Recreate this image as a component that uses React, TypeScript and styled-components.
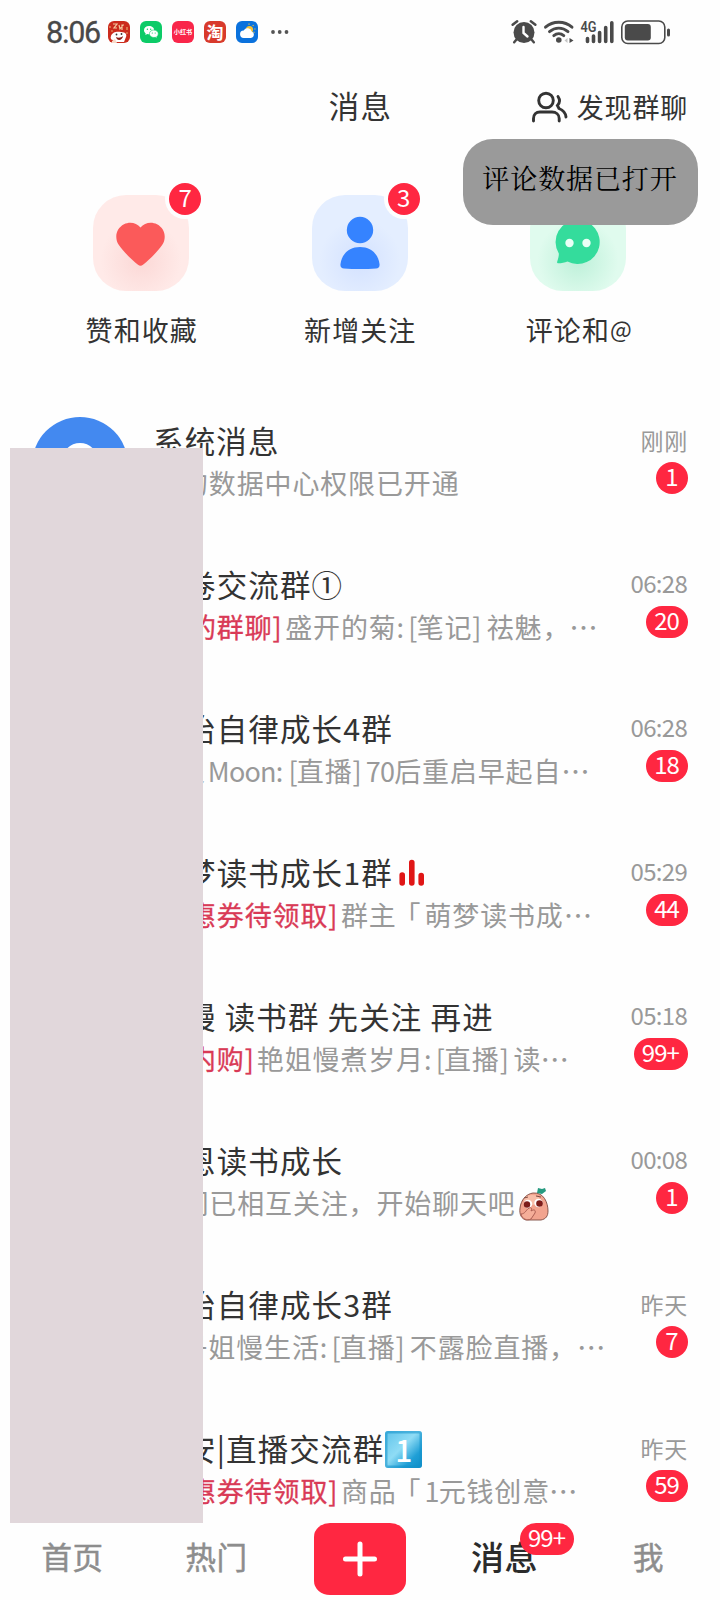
import React from "react";
import styled, { createGlobalStyle } from "styled-components";

const sans = `"Noto Sans CJK SC", "Noto Sans", sans-serif`;

const Global = createGlobalStyle`
  *, *::before, *::after { box-sizing: border-box; }
  body { margin: 0; background: #fefefe; font-family: ${sans}; color: #333; }
  svg { display: block; flex: none; }
`;

const Screen = styled.div`
  position: relative;
  width: 720px;
  height: 1600px;
  overflow: hidden;
  display: flex;
  flex-direction: column;
  background: #fefefe;
`;

/* ---------- status bar ---------- */
const StatusBar = styled.div`
  height: 64px;
  flex: none;
  display: flex;
  align-items: center;
  justify-content: space-between;
  padding: 0 50px 0 46px;
`;
const StatusSide = styled.div`
  display: flex;
  align-items: center;
`;
const Clock = styled.span`
  width: 62px;
  padding-top: 2px;
  font: 400 30.5px/34px Roboto, sans-serif;
  letter-spacing: -1.2px;
  color: #484848;
  -webkit-text-stroke: 0.3px #484848;
`;
const AppIcons = styled.div`
  display: flex;
  gap: 10px;
  margin-right: 12px;
`;
const AppIcon = styled.div<{ $bg: string }>`
  width: 22px;
  height: 22px;
  border-radius: 6px;
  display: flex;
  align-items: center;
  justify-content: center;
  background: ${(p) => p.$bg};
`;
const IconText = styled.span<{ $size: number }>`
  font-size: ${(p) => p.$size}px;
  line-height: 22px;
  font-weight: 700;
  color: #fff;
  white-space: nowrap;
`;

/* ---------- header ---------- */
const Header = styled.header`
  height: 88px;
  flex: none;
  display: grid;
  grid-template-columns: 1fr auto 1fr;
  align-items: center;
  padding: 0 31px 6px 32px;
`;
const PageTitle = styled.h1`
  grid-column: 2;
  margin: 0;
  font-size: 30.5px;
  line-height: 40px;
  font-weight: 400;
  letter-spacing: 1.2px;
`;
const Discover = styled.div`
  display: flex;
  justify-content: flex-end;
  align-items: center;
  gap: 9px;
  padding: 4px 1px 0 0;
  font-size: 27px;
  line-height: 40px;
  letter-spacing: 0.8px;
`;

/* ---------- shortcuts ---------- */
const Shortcuts = styled.section`
  height: 241px;
  flex: none;
  display: flex;
  padding: 43px 31px 0 32px;
`;
const Shortcut = styled.div`
  width: 218.5px;
  display: flex;
  flex-direction: column;
  align-items: center;
`;
const Tile = styled.div<{ $bg: string; $glow: string }>`
  position: relative;
  width: 96px;
  height: 96px;
  border-radius: 33px;
  background: radial-gradient(circle at 50% 68%, ${(p) => p.$glow} 0%, ${(p) => p.$bg} 50%);
`;
const ShortcutLabel = styled.span`
  margin: 19px 0 0 1px;
  font-size: 27px;
  line-height: 40px;
  letter-spacing: 1.1px;
  white-space: nowrap;
`;
const AtSign = styled.span`
  font-size: 23px;
  letter-spacing: 0;
  position: relative;
  top: -3px;
`;

const Badge = styled.span`
  min-width: 32px;
  height: 32px;
  padding: 0 9px 0 8px;
  border-radius: 16px;
  background: #ff2741;
  color: #fff;
  font-size: 24px;
  line-height: 28px;
  letter-spacing: -0.9px;
  text-align: center;
  white-space: nowrap;
`;
const TileBadge = styled(Badge)`
  position: absolute;
  left: 76px;
  top: -12px;
  box-shadow: 0 0 0 4px #fefefe;
`;

const Toast = styled.div`
  position: absolute;
  left: 463px;
  top: 139px;
  width: 235px;
  height: 86px;
  border-radius: 30px;
  display: flex;
  justify-content: center;
  padding: 19px 1px 0 0;
  background: rgba(152, 152, 152, 0.985);
  color: #000;
  font-family: "Noto Serif CJK SC", "Songti SC", ${sans};
  font-weight: 400;
  font-size: 27px;
  line-height: 40px;
  letter-spacing: 0.9px;
  white-space: nowrap;
`;

/* ---------- conversations ---------- */
const List = styled.main`
  flex: 1;
  min-height: 0;
  overflow: hidden;
`;
const Row = styled.article`
  height: 144px;
  display: flex;
  padding: 24px 32px 0;
`;
const Avatar = styled.div`
  width: 96px;
  height: 96px;
  flex: none;
  margin-right: 25px;
`;
const Body = styled.div`
  flex: 1;
  min-width: 0;
  padding-top: 3px;
`;
const Title = styled.h2<{ $indent: number }>`
  margin: 0;
  padding-left: ${(p) => p.$indent}px;
  display: flex;
  align-items: center;
  height: 40px;
  font-size: 30.5px;
  line-height: 40px;
  font-weight: 400;
  letter-spacing: 1.15px;
  white-space: pre;
`;
const Preview = styled.p<{ $indent: number }>`
  margin: 3px 0 0;
  padding-left: ${(p) => p.$indent}px;
  display: flex;
  align-items: center;
  height: 40px;
  font-size: 27px;
  line-height: 40px;
  letter-spacing: 0.85px;
  color: #999;
  white-space: pre;
`;
const Latin = styled.span`
  letter-spacing: -0.8px;
`;
const Part = styled.span<{ $gap?: number; $tag?: boolean }>`
  margin-left: ${(p) => p.$gap ?? 0}px;
  ${(p) => p.$tag && "color: #d93a56; -webkit-text-stroke: 0.3px #d93a56;"}
  ${Latin} {
    ${(p) => p.$tag && "letter-spacing: -2px;"}
  }
`;
const Dots = styled.span<{ $gap?: number }>`
  margin-left: ${(p) => p.$gap ?? 0}px;
  font-size: 28.5px;
  letter-spacing: 0;
`;
const Side = styled.div`
  flex: none;
  display: flex;
  flex-direction: column;
  align-items: flex-end;
`;
const Time = styled.time<{ $words: boolean }>`
  height: 40px;
  margin: 2px ${(p) => (p.$words ? 0 : 1)}px 3px 0;
  font-size: ${(p) => (p.$words ? 23 : 24)}px;
  line-height: ${(p) => (p.$words ? 42 : 40)}px;
  letter-spacing: ${(p) => (p.$words ? 0.8 : -0.7)}px;
  color: #999;
`;
const Cover = styled.div`
  position: absolute;
  left: 10px;
  top: 448px;
  width: 193px;
  height: 1075px;
  background: #e1d7db;
`;

/* ---------- tab bar ---------- */
const TabBar = styled.nav`
  height: 82px;
  flex: none;
  display: grid;
  grid-template-columns: repeat(5, 144px);
  align-items: center;
  justify-items: center;
  background: #fefefe;
`;
const Tab = styled.div<{ $active?: boolean }>`
  position: relative;
  padding: 0 0 6px 1px;
  font-size: ${(p) => (p.$active ? 33 : 30.5)}px;
  line-height: 40px;
  font-weight: ${(p) => (p.$active ? 500 : 400)};
  -webkit-text-stroke: ${(p) => (p.$active ? "0" : "0.5px #8d8d8d")};
  color: ${(p) => (p.$active ? "#2b2b2b" : "#8d8d8d")};
  letter-spacing: 0.6px;
`;
const TabBadge = styled(Badge)`
  position: absolute;
  left: 50px;
  top: -13px;
  font-weight: 400;
`;
const AddButton = styled.div`
  width: 92px;
  height: 72px;
  border-radius: 16px / 14px;
  display: flex;
  align-items: center;
  justify-content: center;
  background: #ff2741;
`;

type Piece = { t: string; gap?: number; tag?: boolean; dots?: boolean; face?: boolean };
type Chat = {
  title: string;
  titleIndent: number;
  mark?: "bars" | "one";
  indent: number;
  pieces: Piece[];
  time: string;
  count: string;
};

const chats: Chat[] = [
  { title: "系统消息", titleIndent: 0, indent: 28, pieces: [{ t: "的数据中心权限已开通" }], time: "刚刚", count: "1" },
  {
    title: "卷交流群①", titleIndent: 32, indent: 36,
    pieces: [{ t: "的群聊]", tag: true }, { t: "盛开的菊:", gap: 5.5 }, { t: "[笔记]", gap: 5 }, { t: "祛魅，", gap: 6 }, { t: "…", dots: true, gap: -1 }],
    time: "06:28", count: "20",
  },
  {
    title: "治自律成长4群", titleIndent: 32, indent: 25,
    pieces: [{ t: "人" }, { t: "Moon:", gap: 2 }, { t: "[直播]", gap: 6 }, { t: "70后重启早起自", gap: 5 }, { t: "…", dots: true }],
    time: "06:28", count: "18",
  },
  {
    title: "梦读书成长1群", titleIndent: 32, mark: "bars", indent: 36,
    pieces: [{ t: "惠券待领取]", tag: true }, { t: "群主", gap: 5.5 }, { t: "「", gap: -3 }, { t: "萌梦读书成", gap: 3 }, { t: "…", dots: true }],
    time: "05:29", count: "44",
  },
  {
    title: "慢 读书群 先关注 再进", titleIndent: 32, indent: 36,
    pieces: [{ t: "内购]", tag: true }, { t: "艳姐慢煮岁月:", gap: 5 }, { t: "[直播]", gap: 5 }, { t: "读", gap: 5.5 }, { t: "…", dots: true, gap: -1 }],
    time: "05:18", count: "99+",
  },
  {
    title: "恩读书成长", titleIndent: 32, indent: 28.5,
    pieces: [{ t: "们已相互关注，开始聊天吧" }, { t: "", face: true }],
    time: "00:08", count: "1",
  },
  {
    title: "治自律成长3群", titleIndent: 32, indent: 27.5,
    pieces: [{ t: "丹姐慢生活:" }, { t: "[直播]", gap: 5 }, { t: "不露脸直播，", gap: 6 }, { t: "…", dots: true }],
    time: "昨天", count: "7",
  },
  {
    title: "安|直播交流群", titleIndent: 32, mark: "one", indent: 36,
    pieces: [{ t: "惠券待领取]", tag: true }, { t: "商品", gap: 5.5 }, { t: "「", gap: -3 }, { t: "1元钱创意", gap: 3 }, { t: "…", dots: true, gap: -1 }],
    time: "昨天", count: "59",
  },
];

const KeycapBox = styled.span`
  width: 37px;
  height: 37px;
  margin: 2px 0 0 1px;
  border-radius: 3px;
  display: flex;
  align-items: center;
  justify-content: center;
  background: linear-gradient(135deg, #5fc3ea 0%, #8fdcf5 45%, #1f9fd6 75%, #0d8cc6 100%);
  box-shadow: inset 0 0 0 2.5px rgba(20, 146, 203, 0.55);
  color: #fff;
  font: 500 30px/36px ${sans};
  letter-spacing: 0;
`;

const BarsIcon = styled.svg`
  margin: 1px 0 0 6px;
`;
const Bars = () => (
  <BarsIcon width="26" height="28" viewBox="0 0 26 28">
    <g stroke="#e01616" strokeWidth="5.6" strokeLinecap="round">
      <path d="M3.2 16V24M12.800 3.500V24M22.200 16.500V24" />
    </g>
  </BarsIcon>
);

const FaceIcon = styled.svg`
  margin: 1px 0 0 3px;
`;
const Face = () => (
  <FaceIcon width="30" height="34" viewBox="0 0 30 34">
    <path d="M14 6C7 7 2 13 1 21c-1 7 2 11 6 12h15c5-1 7-4 7-9C29 16 25 5 14 6Z" fill="#f2a48f" stroke="#7d4a40" strokeWidth=".9" />
    <ellipse cx="13" cy="13" rx="8" ry="5" fill="#f8bea9" />
    <path d="M18 6 19 1l4 1 3-1 1 3-4 3Z" fill="#269a80" />
    <circle cx="9" cy="17" r="4.2" fill="#fff" />
    <circle cx="19.5" cy="16" r="4.2" fill="#fff" />
    <circle cx="8" cy="17.5" r="3.2" fill="#7d1d1b" />
    <circle cx="20.5" cy="16.5" r="3.3" fill="#7d1d1b" />
    <path d="M5 11l4-1M17 9l5 1" stroke="#7d4a40" strokeWidth="1" />
    <path d="M2 27c4 0 5-4 8-6 3-1 3 1 2 3 3-2 5-1 4 2l-4 6c-4 2-9 0-10-5Z" fill="#f5ae99" stroke="#a5574c" strokeWidth=".9" />
  </FaceIcon>
);

const CartoonIcon = () => (
  <svg width="22" height="22" viewBox="0 0 22 22">
    <path d="M5 3h4L6 7h3M11 4l1 4 3-4M16 4h-2v5" stroke="#f3c9a0" strokeWidth="1.2" fill="none" />
    <path d="M2 5v2M3 10h2M19 6v3M18 12h2" stroke="#e9a56e" strokeWidth="1.2" />
    <path d="M3 15c1-4 6-5 10-4 5 0 6 3 5 5l-2 5H7l-2-2c-2 0-3-2-2-4Z" fill="#fff" />
    <path d="M8 16c2 1 5 1 7-1 0 4-6 6-7 1Z" fill="#8b1d17" />
    <circle cx="8.5" cy="13.5" r=".9" fill="#333" />
    <circle cx="13.5" cy="13" r=".9" fill="#333" />
    <path d="m4 20 3-2 2 4H4Z" fill="#f8d9c8" />
  </svg>
);

const WechatIcon = () => (
  <svg width="22" height="22" viewBox="0 0 22 22">
    <path d="M9 5C5.900 5 4 6.900 4 9.200c0 1.300.7 2.400 1.700 3.200L5.300 14l2-1c3 1 6.900-.8 6.900-3.800C14.200 6.900 12 5 9 5Z" fill="#fff" />
    <path d="M13.700 9c2.600 0 4.600 1.700 4.600 3.800 0 1.200-.6 2.200-1.500 2.900l.3 1.500-1.700-.9c-3.200.7-6-1-6-3.500C9.400 10.700 11.300 9 13.700 9Z" fill="#fff" stroke="#0ccb67" strokeWidth=".6" />
    <g fill="#0ccb67">
      <circle cx="7.400" cy="8.200" r=".7" /><circle cx="10.700" cy="8.200" r=".7" />
      <circle cx="12.300" cy="12" r=".6" /><circle cx="15.200" cy="12" r=".6" />
    </g>
  </svg>
);

const WeatherIcon = () => (
  <svg width="22" height="22" viewBox="0 0 22 22">
    <circle cx="13.500" cy="8.500" r="3.600" fill="#f8c234" />
    <path d="M13 2.500v1.200M17.500 4l-.8 1M19.500 8h-1.200M18.500 11.500l-1-.6" stroke="#f8c234" strokeWidth="1.100" />
    <path d="M8 17a3.800 3.800 0 0 1-.3-7.600 4.300 4.300 0 0 1 8 1.200A3.300 3.300 0 0 1 15 17Z" fill="#fff" />
  </svg>
);

const StatusGlyphs = () => (
  <svg width="160" height="26" viewBox="0 0 160 26" fill="#4a4a4a">
    {/* alarm clock */}
    <circle cx="14" cy="13.500" r="10.500" />
    <path d="M2.600 5.800 7.200 2.200M20.800 2.200l4.600 3.600M6.500 20.500l-2.300 2.700M21.500 20.500l2.300 2.700" stroke="#4a4a4a" strokeWidth="2.500" strokeLinecap="round" />
    <path d="M13.500 8v6l4 3.500" stroke="#fff" strokeWidth="2.400" fill="none" strokeLinecap="round" />
    {/* wifi */}
    <g fill="none" stroke="#4a4a4a" strokeWidth="2.900" strokeLinecap="round">
      <path d="M35.500 8.200c7.500-6.600 19-6.600 26.500 0" />
      <path d="M39.500 12.600c5.500-4.700 13-4.700 18.500 0" />
      <path d="M43.800 16.600c3-2.500 7-2.500 10 0" />
    </g>
    <circle cx="48.800" cy="21" r="2.800" />
    <path d="M57.500 19v5l-3-2.500Z" fill="#c4c4c4" />
    <path d="M59.500 19v5l4-2.500Z" />
    {/* mobile signal */}
    <g stroke="#4a4a4a" strokeWidth="3.600" strokeLinecap="round">
      <path d="M77.500 19.500v3M83.500 17v5.500M89.600 13.500v9M95.700 8.500v14M101.800 3.800v18.700" />
    </g>
    <text x="70.500" y="13.300" fontFamily="Roboto, sans-serif" fontWeight="600" fontSize="15.500" textLength="16" lengthAdjust="spacingAndGlyphs">4G</text>
    {/* battery */}
    <rect x="111.800" y="2" width="43" height="22.500" rx="6" fill="none" stroke="#4a4a4a" strokeWidth="1.600" />
    <rect x="114.800" y="5" width="26" height="16.500" rx="3" />
    <rect x="157" y="9.500" width="3" height="8" rx="1.500" />
  </svg>
);

const PeopleIcon = () => (
  <svg width="37" height="32" viewBox="0 0 37 32" fill="none" stroke="#333" strokeWidth="2.900" strokeLinecap="round">
    <circle cx="15" cy="9.500" r="7.300" />
    <path d="M2.500 30v-2.500c0-4 2.500-6.500 6.500-6.500h12c4 0 7.200 2.500 7.200 6.500V30" />
    <path d="M27 5.500c2.200 3.200 1.800 6.500-.6 9l1.600 3c3 1.200 6.500 3.500 7 8.500" />
  </svg>
);

const HeartIcon = () => (
  <svg width="96" height="96" viewBox="0 0 96 96">
    <path d="M47.500 32.500c4-5 11-6 16.500-3.200 8 4.300 9.800 13.200 5.300 20.500C65.500 55.800 56.500 64.500 50 69.800c-1.600 1.300-3.400 1.300-5 0C38.500 64.500 29.500 55.800 25.700 49.800c-4.500-7.300-2.700-16.200 5.300-20.500 5.500-2.800 12.500-1.800 16.500 3.200Z" fill="#fb5a5a" />
  </svg>
);
const PersonIcon = () => (
  <svg width="96" height="96" viewBox="0 0 96 96" fill="#3583ff">
    <circle cx="48" cy="35" r="13.200" />
    <path d="M48 52c10 0 18 6 19.500 17 .4 3-1 4.200-3.500 4.500-10 .8-22 .8-32 0-2.500-.3-3.900-1.500-3.500-4.500C30 58 38 52 48 52Z" />
  </svg>
);
const ChatIcon = () => (
  <svg width="96" height="96" viewBox="0 0 96 96">
    <path d="M48 25a22 22 0 1 1-10.500 41.500c-2.800 1-6 1.800-9 1.800-1.500 0-1.700-.8-1.100-2.200.9-2.500 1.600-5.500 1.400-7.600A22 22 0 0 1 48 25Z" fill="#34dc9c" />
    <circle cx="39.500" cy="48" r="4.200" fill="#eafff6" />
    <circle cx="56.500" cy="48" r="4.200" fill="#eafff6" />
  </svg>
);

const SystemAvatar = () => (
  <svg width="96" height="96" viewBox="0 0 96 96">
    <circle cx="48" cy="48" r="48" fill="#4389f0" />
    <path d="M30 44a18 18 0 0 1 36 0v22H30Z" fill="#fff" />
  </svg>
);

const renderPiece = (p: Piece, i: number) => {
  if (p.face) return <Face key={i} />;
  if (p.dots) return <Dots key={i} $gap={p.gap}>{p.t}</Dots>;
  return (
    <Part key={i} $gap={p.gap} $tag={p.tag}>
      {p.t.split(/([\x20-\x7e]+)/).map((s, k) => (k % 2 ? <Latin key={k}>{s}</Latin> : s))}
    </Part>
  );
};

export default function App() {
  return (
    <Screen>
      <Global />
      <StatusBar>
        <StatusSide>
          <Clock>8:06</Clock>
          <AppIcons>
            <AppIcon $bg="#cb2b1d"><CartoonIcon /></AppIcon>
            <AppIcon $bg="#0ccb67"><WechatIcon /></AppIcon>
            <AppIcon $bg="#f9264a"><IconText $size={6.2}>小红书</IconText></AppIcon>
            <AppIcon $bg="#d83a2c"><IconText $size={17}>淘</IconText></AppIcon>
            <AppIcon $bg="#0b72dd"><WeatherIcon /></AppIcon>
          </AppIcons>
          <svg width="20" height="6" viewBox="0 0 20 6" fill="#555">
            <circle cx="3" cy="3" r="1.900" /><circle cx="9.700" cy="3" r="1.900" /><circle cx="16.500" cy="3" r="1.900" />
          </svg>
        </StatusSide>
        <StatusGlyphs />
      </StatusBar>

      <Header>
        <PageTitle>消息</PageTitle>
        <Discover><PeopleIcon />发现群聊</Discover>
      </Header>

      <Shortcuts>
        <Shortcut>
          <Tile $bg="#ffeae8" $glow="#fbd8d6"><HeartIcon /><TileBadge>7</TileBadge></Tile>
          <ShortcutLabel>赞和收藏</ShortcutLabel>
        </Shortcut>
        <Shortcut>
          <Tile $bg="#e4eeff" $glow="#d3e1ff"><PersonIcon /><TileBadge>3</TileBadge></Tile>
          <ShortcutLabel>新增关注</ShortcutLabel>
        </Shortcut>
        <Shortcut>
          <Tile $bg="#e0fbee" $glow="#bdf0d9"><ChatIcon /></Tile>
          <ShortcutLabel>评论和<AtSign>@</AtSign></ShortcutLabel>
        </Shortcut>
      </Shortcuts>

      <List>
        {chats.map((c, i) => (
          <Row key={i}>
            <Avatar>{i === 0 && <SystemAvatar />}</Avatar>
            <Body>
              <Title $indent={c.titleIndent}>
                {c.title}
                {c.mark === "bars" && <Bars />}
                {c.mark === "one" && <KeycapBox>1</KeycapBox>}
              </Title>
              <Preview $indent={c.indent}>{c.pieces.map(renderPiece)}</Preview>
            </Body>
            <Side>
              <Time $words={!c.time.includes(":")}>{c.time}</Time>
              <Badge>{c.count}</Badge>
            </Side>
          </Row>
        ))}
      </List>

      <TabBar>
        <Tab>首页</Tab>
        <Tab>热门</Tab>
        <AddButton>
          <svg width="36" height="36" viewBox="0 0 36 36" stroke="#fff" strokeWidth="5" strokeLinecap="round">
            <path d="M18 3v30M3.500 18h29" />
          </svg>
        </AddButton>
        <Tab $active>消息<TabBadge>99+</TabBadge></Tab>
        <Tab>我</Tab>
      </TabBar>

      <Cover />
      <Toast>评论数据已打开</Toast>
    </Screen>
  );
}
